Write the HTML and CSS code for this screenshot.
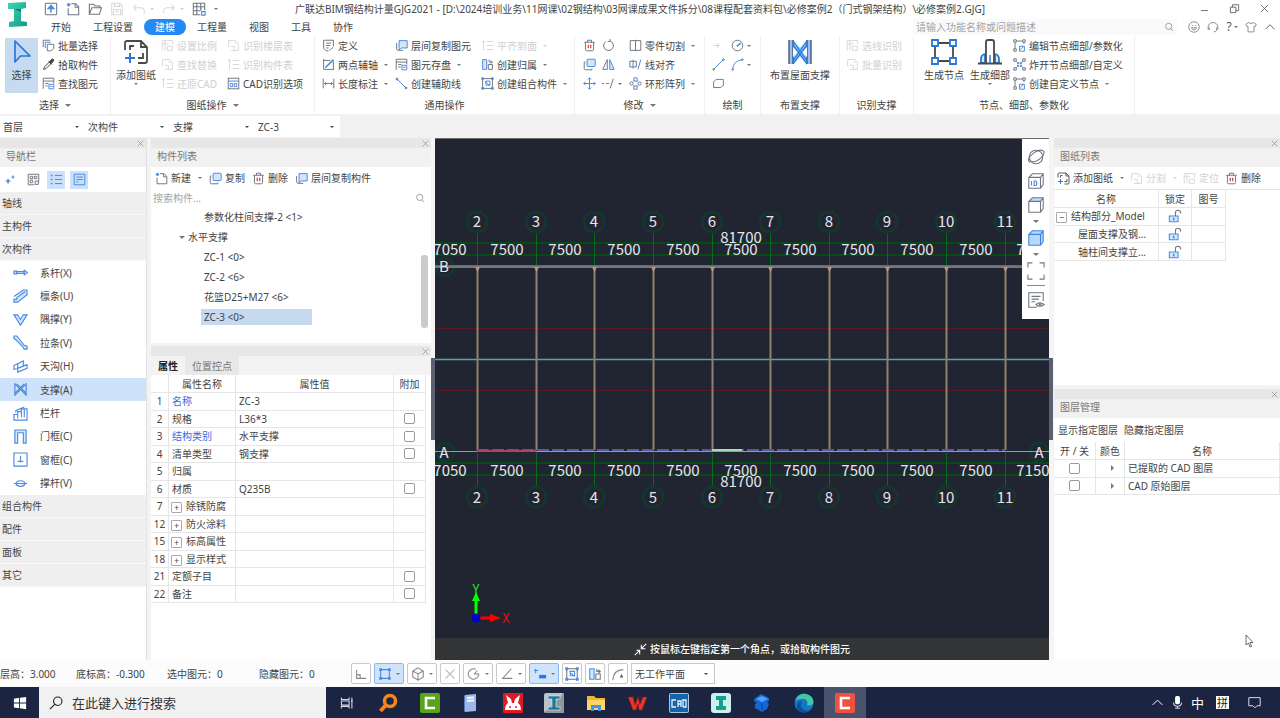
FILE: index.html
```html
<!DOCTYPE html>
<html lang="zh-CN">
<head>
<meta charset="utf-8">
<title>广联达BIM钢结构计量GJG2021</title>
<link rel="stylesheet" href="styles.css">
</head>
<body>
<svg class="sprite" aria-hidden="true">
  <symbol id="i-up" viewBox="0 0 16 16"><rect x="1.500" y="1.500" width="13" height="13" rx="1" class="g"/><path d="M8 12V5M5 7.500L8 4l3 3.500z" class="b2 fb"/></symbol>
  <symbol id="i-new" viewBox="0 0 16 16"><path d="M6 2h5l3.500 3.500v9H2.500V7M10.500 2v4h4" class="g"/><path d="M3 1v4M1 3h4" class="b2"/></symbol>
  <symbol id="i-open" viewBox="0 0 16 16"><path d="M1.500 14V2.500h5l1.500 2h5.500v2M1.500 14l3-7.500h11L13 14z" class="g"/></symbol>
  <symbol id="i-save" viewBox="0 0 16 16"><path d="M2 1.500h9l3 3v10H2zM5 1.500V5h6V2M4 14.500V8.500h8v6M6 11h4" class="l"/></symbol>
  <symbol id="i-undo" viewBox="0 0 16 16"><path d="M5 3L2 6.500 5 10M2 6.500h8q4 0 4 3.500v3" class="l"/></symbol>
  <symbol id="i-redo" viewBox="0 0 16 16"><path d="M11 3l3 3.500-3 3.500M14 6.500H6Q2 6.500 2 10v3" class="l"/></symbol>
  <symbol id="i-table" viewBox="0 0 16 16"><path d="M1.500 1.500h13v8M1.500 1.500v13h8M1.500 5.500h13M1.500 10h8M5.500 1.500v13M10 1.500v8" class="g"/><path d="M11 11h4v4h-4zM10 5.500v4" class="b"/></symbol>
  <symbol id="i-cursor" viewBox="0 0 26 26"><path d="M6 2v21l5.500-6H21z" fill="#b9d6fa" stroke="#2878d8" stroke-width="1.700" stroke-linejoin="round"/></symbol>
  <symbol id="i-copy" viewBox="0 0 16 16"><rect x="5" y="1.500" width="10" height="9" rx="1" class="b lb"/><path d="M3 5H1.500v8q0 1.500 1.500 1.500h8V13" class="g"/></symbol>
  <symbol id="i-batch" viewBox="0 0 16 16"><path d="M1.500 10V1.500H10" class="g"/><path d="M4 11V4h7" class="b"/><path d="M6.500 6.500h8v5l-3 3h-5z" class="g"/></symbol>
  <symbol id="i-pick" viewBox="0 0 16 16"><path d="M2 14l1-3 6-6 2 2-6 6zM8 3.500l4.500 4.500" class="k"/><path d="M9 5l3-3.500q2-1 2.500 1 0 1.500-3.500 4.500z" class="k fk"/></symbol>
  <symbol id="i-find" viewBox="0 0 16 16"><path d="M1.500 14.500v-13h13V8M1.500 5h13M4 8h4M4 11h3" class="g"/><path d="M8.500 9h6v5.500h-6zM10 11.500h3" class="b"/></symbol>
  <symbol id="i-adddwg" viewBox="0 0 26 26"><path d="M2 11V4q0-2 2-2h14l6 6v14q0 2-2 2h-7M18 2v6h6M7 11V7h4M20 14v5h-5" class="d"/><path d="M7 14v10M2 19h10" stroke="#2878d8" stroke-width="2" fill="none"/></symbol>
  <symbol id="i-dis" viewBox="0 0 16 16"><path d="M1.500 14V2h13v5M5 2v12M1.500 6H9" class="l"/><path d="M8 9h6v5H8z" class="l"/></symbol>
  <symbol id="i-dis2" viewBox="0 0 16 16"><path d="M3 2v12M1 4l2-2 2 2M7 3h8M7 8h8M7 13h8" class="l"/></symbol>
  <symbol id="i-dis3" viewBox="0 0 16 16"><path d="M2 2h9l3 3v9H5M2 2v8M5 9h4v5M9 5h3" class="l"/></symbol>
  <symbol id="i-cad" viewBox="0 0 16 16"><rect x="1.500" y="1.500" width="13" height="13" class="g"/><path d="M1.500 5h13M4 8v4h3V8zM9 8h3v4H9z" class="b"/></symbol>
  <symbol id="i-def" viewBox="0 0 16 16"><path d="M2 11.500v-10h12V9M2 11.500l3 3h3M5 5h6M5 8h5M5 11h3" class="g"/><path d="M9 14l5-4" class="b"/></symbol>
  <symbol id="i-axis" viewBox="0 0 16 16"><path d="M2 1v13h13M14 3v11M2 3h8" class="g"/><path d="M4 12l10-10" class="b2"/></symbol>
  <symbol id="i-len" viewBox="0 0 16 16"><path d="M1.500 2v12M14.500 2v12" class="g"/><path d="M3 8h10M5 6L3 8l2 2M11 6l2 2-2 2" class="b"/></symbol>
  <symbol id="i-layer" viewBox="0 0 16 16"><path d="M5 2h10v9H8l-3 2z" class="b lb"/><path d="M2 5v7q0 2 3 2h5" class="g"/></symbol>
  <symbol id="i-line" viewBox="0 0 16 16"><path d="M2 2l12 12" class="b"/><circle cx="2.500" cy="2.500" r="1.200" class="g"/><circle cx="13.500" cy="13.500" r="1.200" class="g"/></symbol>
  <symbol id="i-own" viewBox="0 0 16 16"><path d="M2 14V2h5v12z" class="b lb"/><path d="M9 8h5v6H9zM10 2v3h4M12 3l2 2-2 2" class="g"/></symbol>
  <symbol id="i-combo" viewBox="0 0 16 16"><rect x="2" y="2" width="12" height="12" class="g"/><path d="M5 5l6 6M11 5v5H6V5z" class="b"/><path d="M1 1h2v2H1zM13 1h2v2h-2zM1 13h2v2H1zM13 13h2v2h-2z" class="b fb"/></symbol>
  <symbol id="i-trash" viewBox="0 0 16 16"><path d="M1.500 4h13M5.500 4V1.500h5V4M3 4v9q0 1.500 1.500 1.500h7q1.500 0 1.500-1.500V4" class="g"/><path d="M6.500 7v4.500M9.500 7v4.500" stroke="#d23c3c" stroke-width="1.500"/></symbol>
  <symbol id="i-rot" viewBox="0 0 16 16"><path d="M10 2.500A6 6 0 1 1 5 3M10 0v3H7" class="g"/></symbol>
  <symbol id="i-mirror" viewBox="0 0 16 16"><path d="M6.500 2v12H1z" class="g"/><path d="M9.500 2v12H15z" class="b lb"/></symbol>
  <symbol id="i-move" viewBox="0 0 16 16"><path d="M8 1v14M1 8h14M6 3l2-2 2 2M6 13l2 2 2-2M3 6L1 8l2 2M13 6l2 2-2 2" class="b"/></symbol>
  <symbol id="i-ext" viewBox="0 0 16 16"><path d="M0 8h3M5 8h4" class="b"/><path d="M14 2L10 14" class="g"/></symbol>
  <symbol id="i-cut" viewBox="0 0 16 16"><path d="M1.500 2H14.500v12H1.500zM8 1v14" class="g"/></symbol>
  <symbol id="i-align" viewBox="0 0 16 16"><path d="M1 4h8v7H1z" class="g"/><path d="M5 2v11M14.500 2L11 14" class="b"/></symbol>
  <symbol id="i-ring" viewBox="0 0 16 16"><path d="M6 1h4v4H6zM6 11h4v4H6z" class="b"/><circle cx="3" cy="8" r="2" class="g"/><circle cx="13" cy="8" r="2" class="g"/><path d="M5 5h1M10 5h1M5 11h1M10 11h1" class="b"/></symbol>
  <symbol id="i-pt" viewBox="0 0 16 16"><path d="M2 8h8M7 5v6" class="l"/></symbol>
  <symbol id="i-circ" viewBox="0 0 16 16"><circle cx="8" cy="8" r="6.500" class="g"/><path d="M7 9l5-4" class="b2"/></symbol>
  <symbol id="s-circ" viewBox="0 0 16 16"><path d="M13.500 8A6 6 0 1 1 10 2.500M8 8h6M8 8l4-4" class="s"/></symbol>
  <symbol id="i-seg" viewBox="0 0 16 16"><path d="M2 14L14 2" class="b"/><circle cx="2" cy="14" r="1" class="g"/><circle cx="14" cy="2" r="1" class="g"/></symbol>
  <symbol id="i-arc" viewBox="0 0 16 16"><path d="M2 14Q3 3 14 2" class="b"/><circle cx="2" cy="14" r="1" class="g"/><circle cx="14" cy="2" r="1" class="g"/></symbol>
  <symbol id="i-rect" viewBox="0 0 16 16"><path d="M5 3h9v7" class="b"/><path d="M14 9v1l-3 3H2V6l3-3" class="g"/></symbol>
  <symbol id="i-brace" viewBox="0 0 26 26"><path d="M2 1h4l7 8 7-8h4v24h-4l-7-8-7 8H2z" fill="#8fc3fa"/><path d="M2 1v24M6 1v24M20 1v24M24 1v24" stroke="#444c5c" stroke-width="1.300"/><path d="M6 8l5 5-5 5zM20 8l-5 5 5 5z" fill="#fff"/><path d="M6 2l14 20M20 2L6 22M6 6l14 19M20 6L6 25" stroke="#2b7fe0" stroke-width="1.300"/></symbol>
  <symbol id="i-node" viewBox="0 0 26 26"><path d="M7 4h12M7 22h12M4 7v12M22 7v12" class="d"/><path d="M1 1h6v6H1zM19 1h6v6h-6zM1 19h6v6H1zM19 19h6v6h-6z" fill="#fff" stroke="#2878d8" stroke-width="1.800"/></symbol>
  <symbol id="i-detail" viewBox="0 0 26 26"><path d="M8 15q-4 1-4 5v4h4zM18 15q4 1 4 5v4h-4z" fill="#d6e8fc" stroke="#2878d8" stroke-width="1.800"/><path d="M9 24V3q0-2 2-2h4q2 0 2 2v21M1 24.500h24" class="d"/><path d="M13 16v8" stroke="#2878d8" stroke-width="1.500"/></symbol>
  <symbol id="i-nedit" viewBox="0 0 16 16"><path d="M1 1h3v3H1zM12 1h3v3h-3zM1 12h3v3H1zM4 2.500h8M2.500 4v8M13.500 4v2" class="g"/><path d="M8 15V9h6v6zM9 13l4-4" class="b"/></symbol>
  <symbol id="i-nexp" viewBox="0 0 16 16"><path d="M1 1h3v3H1zM12 1h3v3h-3zM1 12h3v3H1zM12 12h3v3h-3z" class="g"/><path d="M4 4l3 3M12 4L9 7M4 12l3-3M12 12L9 9M5 7h2V5M11 7H9V5M5 9h2v2M11 9H9v2" class="b"/></symbol>
  <symbol id="i-search" viewBox="0 0 16 16"><circle cx="7.500" cy="7" r="5" class="s"/><path d="M11 11l3.500 3.500" class="s"/></symbol>
  <symbol id="i-face" viewBox="0 0 16 16"><circle cx="8" cy="8" r="7" class="s"/><path d="M4.500 9h7q-1 3-3.500 3t-3.500-3zM5 6h1.500M9.500 6H11" class="s"/></symbol>
  <symbol id="i-head" viewBox="0 0 16 16"><path d="M3 11H1.500V8a6.500 6 0 0 1 13 0v3H13M3 8v4M13 8v4q-1 2.500-4 2.500" class="s"/></symbol>
  <symbol id="i-shirt" viewBox="0 0 16 16"><path d="M5 2q3 3 6 0l4 2.500-1.500 3-1.500-.5v7.500H4V7l-1.500.5L1 4.500z" class="s"/></symbol>
  <symbol id="i-chev" viewBox="0 0 16 16"><path d="M2 11l6-6 6 6" class="cur"/></symbol>
  <symbol id="i-close" viewBox="0 0 16 16"><path d="M3 3l10 10M13 3L3 13" class="cur"/></symbol>
  <symbol id="i-min" viewBox="0 0 16 16"><path d="M3 11h10" class="cur"/></symbol>
  <symbol id="i-rest" viewBox="0 0 16 16"><path d="M2 6h8v8H2zM5 6V2.500h9V11h-4" class="cur"/></symbol>
  <symbol id="i-star" viewBox="0 0 16 16"><path d="M5 7v6M2 10h6" class="b2"/><path d="M11 3v4M9 5h4" class="b"/></symbol>
  <symbol id="i-qr" viewBox="0 0 16 16"><path d="M1.500 1.500h13v9M1.500 1.500v13H9M4 4h3v3H4zM9 4h3v3H9zM4 9h3v3H4zM10 10h4v4h-4z" class="g"/></symbol>
  <symbol id="i-list" viewBox="0 0 16 16"><path d="M6 3h9M6 8h9M6 13h9" class="b"/><path d="M1 3h2M1 8h2M1 13h2" class="b2"/></symbol>
  <symbol id="i-list2" viewBox="0 0 16 16"><path d="M1.500 1.500h13v13h-13zM4 5h8M4 8h8M4 11h3" class="b"/></symbol>
  <symbol id="n-tie" viewBox="0 0 16 16"><path d="M4 7h8v2H4z" class="b lb"/><path d="M1 6.500h3v3H1zM12 5.500L15.500 8 12 10.500z" class="b lb"/></symbol>
  <symbol id="n-purlin" viewBox="0 0 16 16"><path d="M1 8L11 1h4v5L5 14H1v-3h3V9l9-6" class="b lb"/></symbol>
  <symbol id="n-knee" viewBox="0 0 16 16"><path d="M1 3h4l3 5 3-5h4L8 14z" class="b lb"/></symbol>
  <symbol id="n-rod" viewBox="0 0 16 16"><path d="M1 1h3l8 10 3 1v3h-3l-2-3L2 4H1z" class="b lb"/></symbol>
  <symbol id="n-gutter" viewBox="0 0 16 16"><path d="M1 7l10-5v5l4-1v4L5 14v-4l-4 1zM5 10l10-4M5 5v5" class="b"/></symbol>
  <symbol id="n-brace" viewBox="0 0 16 16"><path d="M2 1v14M14 1v14M2 2l12 12M14 2L2 14M4 2l10 10M12 2L2 12" class="b"/></symbol>
  <symbol id="n-rail" viewBox="0 0 16 16"><path d="M1 15V9h4V6h4V3h6v12zM5 9v4M9 6v6M12 3v9M3 7V5l9-4" class="b"/></symbol>
  <symbol id="n-door" viewBox="0 0 16 16"><path d="M2 15V1h12v14h-3V4H5v11z" class="b lb"/></symbol>
  <symbol id="n-win" viewBox="0 0 16 16"><path d="M1 1h14v14H1z" class="b"/><path d="M8 4v7M5 10h6" class="b"/></symbol>
  <symbol id="n-strut" viewBox="0 0 16 16"><path d="M1 8h14M3 8q1-3 5-3t5 3q-1 3-5 3T3 8" class="b"/></symbol>
  <symbol id="i-lock" viewBox="0 0 16 16"><path d="M1.500 8h10v6.500h-10z" class="b lb"/><path d="M6.500 10v3" class="b2"/><path d="M8.500 8V4q0-2.500 3-2.500t3 3.500" class="g"/></symbol>
  <symbol id="v-orbit" viewBox="0 0 20 20"><circle cx="10" cy="10" r="7.500" class="v"/><path d="M3 16Q-1 12 7 6t12-2q0 5-6 9T3 14" class="v"/></symbol>
  <symbol id="v-id" viewBox="0 0 20 20"><path d="M2 6l4-4h12v12l-3 4H2zM2 6h13v12M15 6l3-4" class="v"/><path d="M5 10v5M8 10v5h2q2-2.500 0-5z" class="b"/></symbol>
  <symbol id="v-cube" viewBox="0 0 20 20"><path d="M2 6l4-4h12l-3 4z" fill="#bcdcff"/><path d="M2 6l4-4h12v12l-3 4H2zM2 6h13v12M15 6l3-4" class="v"/></symbol>
  <symbol id="v-solid" viewBox="0 0 20 20"><path d="M2 6l4-4h12v12l-3 4H2zM2 6h13v12M15 6l3-4" fill="#b5d8fd" stroke="#3f84d8" stroke-width="1.200"/></symbol>
  <symbol id="v-fit" viewBox="0 0 20 20"><path d="M1 6V1h5M14 1h5v5M19 14v5h-5M6 19H1v-5" class="v"/></symbol>
  <symbol id="v-prop" viewBox="0 0 20 20"><path d="M11 18H2V2h16v9M5 6h10M5 9h8M5 12h4" class="v"/><path d="M10 15q4-4 9 0-5 4-9 0z" class="v"/><circle cx="14.500" cy="15" r="1" class="v"/></symbol>
  <symbol id="s-ortho" viewBox="0 0 16 16"><path d="M3 3v10h11M3 9h4v4" class="s"/></symbol>
  <symbol id="s-poly" viewBox="0 0 16 16"><path d="M3 3h10v10H3z" class="b"/><path d="M2 2h2v2H2zM12 2h2v2h-2zM2 12h2v2H2zM12 12h2v2h-2z" class="b"/></symbol>
  <symbol id="s-box" viewBox="0 0 16 16"><path d="M8 1l6 3.500v7L8 15l-6-3.500v-7zM2 4.500L8 8l6-3.500M8 8v7" class="s"/></symbol>
  <symbol id="s-ang" viewBox="0 0 16 16"><path d="M13 2L3 13h11" class="s"/></symbol>
  <symbol id="s-arc" viewBox="0 0 16 16"><path d="M2 15Q3 3 14 3" class="s"/><path d="M12 8l2 4h-4z" fill="#555"/></symbol>
  <symbol id="s-snap" viewBox="0 0 16 16"><path d="M3 2v5M1 4h5" class="b"/><path d="M7 9h8v4H7z" fill="#2878e8"/></symbol>
</svg>

<header class="head">
  <svg class="logo" viewBox="0 0 22 28" role="img" aria-label="GJG"><defs><linearGradient id="lg" x1="0" y1="0" x2="1" y2="1"><stop offset="0" stop-color="#3fd6b4"/><stop offset="1" stop-color="#139c86"/></linearGradient></defs><path d="M1 3l18-1v6l-5 1v12l6 1v4l-18 1v-5l5-1V9L1 9z" fill="url(#lg)"/><path d="M7 9l7 0v3z" fill="#0c7c70"/></svg>
  <div class="titlebar">
    <div class="quick">
      <button aria-label="上传"><svg><use href="#i-up"/></svg></button>
      <button aria-label="新建"><svg><use href="#i-new"/></svg></button>
      <button aria-label="打开"><svg><use href="#i-open"/></svg></button>
      <button aria-label="保存"><svg><use href="#i-save"/></svg></button>
      <button aria-label="撤销"><svg><use href="#i-undo"/></svg><i class="caret dim"></i></button>
      <button aria-label="重做"><svg><use href="#i-redo"/></svg><i class="caret dim"></i></button>
      <button aria-label="表格"><svg><use href="#i-table"/></svg></button>
      <button aria-label="自定义"><i class="caret"></i></button>
    </div>
    <h1>广联达BIM钢结构计量GJG2021 - [D:\2024培训业务\11网课\02钢结构\03网课成果文件拆分\08课程配套资料包\必修案例2（门式钢架结构）\必修案例2.GJG]</h1>
    <div class="win">
      <button aria-label="最小化"><svg><use href="#i-min"/></svg></button>
      <button aria-label="还原"><svg><use href="#i-rest"/></svg></button>
      <button aria-label="关闭"><svg><use href="#i-close"/></svg></button>
    </div>
  </div>
  <div class="tabbar">
    <nav class="tabs">
      <a href="#">开始</a><a href="#">工程设置</a><a href="#" class="on">建模</a><a href="#">工程量</a><a href="#">视图</a><a href="#">工具</a><a href="#">协作</a>
    </nav>
    <label class="find"><input type="text" aria-label="搜索功能" placeholder="请输入功能名称或问题描述"><svg><use href="#i-search"/></svg></label>
    <div class="help">
      <button aria-label="反馈"><svg><use href="#i-face"/></svg></button>
      <button aria-label="客服"><svg><use href="#i-head"/></svg></button>
      <button class="q" aria-label="帮助">?<i class="caret"></i></button>
      <button aria-label="皮肤"><svg><use href="#i-shirt"/></svg></button>
      <button aria-label="折叠"><svg><use href="#i-chev"/></svg></button>
    </div>
  </div>
</header>

<div class="ribbon">
  <section class="grp g1"><div class="tools">
    <button class="big on"><svg><use href="#i-cursor"/></svg>选择</button>
    <div class="col">
      <button class="tool"><svg><use href="#i-batch"/></svg>批量选择</button>
      <button class="tool"><svg><use href="#i-pick"/></svg>拾取构件</button>
      <button class="tool"><svg><use href="#i-find"/></svg>查找图元</button>
    </div></div><h2>选择<i class="caret wide"></i></h2></section>
  <section class="grp g2"><div class="tools">
    <button class="big"><svg><use href="#i-adddwg"/></svg>添加图纸<i class="caret"></i></button>
    <div class="col c66">
      <button class="tool" disabled><svg><use href="#i-dis"/></svg>设置比例</button>
      <button class="tool" disabled><svg><use href="#i-dis3"/></svg>查找替换</button>
      <button class="tool" disabled><svg><use href="#i-dis2"/></svg>还原CAD</button>
    </div>
    <div class="col">
      <button class="tool" disabled><svg><use href="#i-dis3"/></svg>识别楼层表</button>
      <button class="tool" disabled><svg><use href="#i-dis2"/></svg>识别构件表</button>
      <button class="tool"><svg><use href="#i-cad"/></svg>CAD识别选项</button>
    </div></div><h2>图纸操作<i class="caret wide"></i></h2></section>
  <section class="grp g3"><div class="tools">
    <div class="col c73">
      <button class="tool"><svg><use href="#i-def"/></svg>定义</button>
      <button class="tool"><svg><use href="#i-axis"/></svg>两点辅轴<i class="caret"></i></button>
      <button class="tool"><svg><use href="#i-len"/></svg>长度标注<i class="caret"></i></button>
    </div>
    <div class="col c86">
      <button class="tool"><svg><use href="#i-layer"/></svg>层间复制图元</button>
      <button class="tool"><svg><use href="#i-find"/></svg>图元存盘<i class="caret"></i></button>
      <button class="tool"><svg><use href="#i-line"/></svg>创建辅助线</button>
    </div>
    <div class="col">
      <button class="tool" disabled><svg><use href="#i-dis2"/></svg>平齐到面<i class="caret"></i></button>
      <button class="tool"><svg><use href="#i-own"/></svg>创建归属<i class="caret"></i></button>
      <button class="tool"><svg><use href="#i-combo"/></svg>创建组合构件<i class="caret"></i></button>
    </div></div><h2>通用操作</h2></section>
  <section class="grp g4"><div class="tools">
    <div class="col c19">
      <button class="tool" aria-label="删除"><svg><use href="#i-trash"/></svg></button>
      <button class="tool" aria-label="复制"><svg><use href="#i-copy"/></svg></button>
      <button class="tool" aria-label="移动"><svg><use href="#i-move"/></svg></button>
    </div>
    <div class="col c27">
      <button class="tool" aria-label="旋转"><svg><use href="#i-rot"/></svg></button>
      <button class="tool" aria-label="镜像"><svg><use href="#i-mirror"/></svg></button>
      <button class="tool tight" aria-label="延伸"><svg><use href="#i-ext"/></svg><i class="caret"></i></button>
    </div>
    <div class="col">
      <button class="tool"><svg><use href="#i-cut"/></svg>零件切割<i class="caret"></i></button>
      <button class="tool"><svg><use href="#i-align"/></svg>线对齐</button>
      <button class="tool"><svg><use href="#i-ring"/></svg>环形阵列<i class="caret"></i></button>
    </div></div><h2>修改<i class="caret wide"></i></h2></section>
  <section class="grp g5"><div class="tools">
    <div class="col c19">
      <button class="tool" aria-label="点" disabled><svg><use href="#i-pt"/></svg></button>
      <button class="tool" aria-label="直线"><svg><use href="#i-seg"/></svg></button>
      <button class="tool" aria-label="矩形"><svg><use href="#i-rect"/></svg></button>
    </div>
    <div class="col">
      <button class="tool tight" aria-label="圆"><svg><use href="#i-circ"/></svg><i class="caret"></i></button>
      <button class="tool tight" aria-label="弧"><svg><use href="#i-arc"/></svg><i class="caret"></i></button>
    </div></div><h2>绘制</h2></section>
  <section class="grp g6"><div class="tools"><button class="big"><svg><use href="#i-brace"/></svg>布置屋面支撑</button></div><h2>布置支撑</h2></section>
  <section class="grp g7"><div class="tools"><div class="col">
      <button class="tool" disabled><svg><use href="#i-dis"/></svg>选线识别</button>
      <button class="tool" disabled><svg><use href="#i-dis3"/></svg>批量识别</button>
    </div></div><h2>识别支撑</h2></section>
  <section class="grp g8"><div class="tools">
    <button class="big"><svg><use href="#i-node"/></svg>生成节点</button>
    <button class="big"><svg><use href="#i-detail"/></svg>生成细部<i class="caret"></i></button>
    <div class="col">
      <button class="tool"><svg><use href="#i-nedit"/></svg>编辑节点细部/参数化</button>
      <button class="tool"><svg><use href="#i-nexp"/></svg>炸开节点细部/自定义</button>
      <button class="tool"><svg><use href="#i-nedit"/></svg>创建自定义节点<i class="caret"></i></button>
    </div></div><h2>节点、细部、参数化</h2></section>
</div>

<div class="filters">
  <span class="sel"><select aria-label="楼层"><option>首层</option></select></span>
  <span class="sel"><select aria-label="构件分类"><option>次构件</option></select></span>
  <span class="sel"><select aria-label="构件类型"><option>支撑</option></select></span>
  <span class="sel"><select aria-label="构件"><option>ZC-3</option></select></span>
</div>

<main class="work">
  <aside class="nav panel">
    <div class="strip"><button aria-label="关闭导航栏"><svg><use href="#i-close"/></svg></button></div>
    <h3>导航栏</h3>
    <div class="navtools">
      <button aria-label="收藏"><svg><use href="#i-star"/></svg></button>
      <button aria-label="图标"><svg><use href="#i-qr"/></svg></button>
      <button aria-label="列表" class="on"><svg><use href="#i-list"/></svg></button>
      <button aria-label="详情" class="on"><svg><use href="#i-list2"/></svg></button>
    </div>
    <button class="acc">轴线</button>
    <button class="acc">主构件</button>
    <button class="acc">次构件</button>
    <ul class="kinds">
      <li><a href="#"><svg><use href="#n-tie"/></svg>系杆(X)</a></li>
      <li><a href="#"><svg><use href="#n-purlin"/></svg>檩条(U)</a></li>
      <li><a href="#"><svg><use href="#n-knee"/></svg>隅撑(Y)</a></li>
      <li><a href="#"><svg><use href="#n-rod"/></svg>拉条(V)</a></li>
      <li><a href="#"><svg><use href="#n-gutter"/></svg>天沟(H)</a></li>
      <li><a href="#" class="on"><svg><use href="#n-brace"/></svg>支撑(A)</a></li>
      <li><a href="#"><svg><use href="#n-rail"/></svg>栏杆</a></li>
      <li><a href="#"><svg><use href="#n-door"/></svg>门框(C)</a></li>
      <li><a href="#"><svg><use href="#n-win"/></svg>窗框(C)</a></li>
      <li><a href="#"><svg><use href="#n-strut"/></svg>撑杆(V)</a></li>
    </ul>
    <button class="acc">组合构件</button>
    <button class="acc">配件</button>
    <button class="acc">面板</button>
    <button class="acc">其它</button>
  </aside>

  <div class="middle">
    <section class="panel comps">
      <div class="strip"><button aria-label="关闭构件列表"><svg><use href="#i-close"/></svg></button></div>
      <h3>构件列表</h3>
      <div class="bar">
        <button class="tool"><svg><use href="#i-new"/></svg>新建<i class="caret"></i></button>
        <button class="tool"><svg><use href="#i-copy"/></svg>复制</button>
        <button class="tool"><svg><use href="#i-trash"/></svg>删除</button>
        <button class="tool"><svg><use href="#i-layer"/></svg>层间复制构件</button>
      </div>
      <label class="filter"><input type="text" aria-label="搜索构件" placeholder="搜索构件..."><svg><use href="#i-search"/></svg></label>
      <div class="treebox">
        <ul class="tree">
          <li class="leaf"><span>参数化柱间支撑-2 &lt;1&gt;</span></li>
          <li><i class="caret wide"></i>水平支撑</li>
          <li class="leaf"><span>ZC-1 &lt;0&gt;</span></li>
          <li class="leaf"><span>ZC-2 &lt;6&gt;</span></li>
          <li class="leaf"><span>花篮D25+M27 &lt;6&gt;</span></li>
          <li class="leaf on"><span>ZC-3 &lt;0&gt;</span></li>
        </ul>
        <div class="scroll"></div>
      </div>
    </section>
    <section class="panel props">
      <div class="strip"><button aria-label="关闭属性"><svg><use href="#i-close"/></svg></button></div>
      <div class="ptabs"><button class="on">属性</button><button>位置控点</button></div>
      <table class="grid ptable">
        <thead><tr><th class="w-no"></th><th class="w-name">属性名称</th><th>属性值</th><th class="w-add">附加</th></tr></thead>
        <tbody>
          <tr><td>1</td><td class="link">名称</td><td>ZC-3</td><td></td></tr>
          <tr><td>2</td><td>规格</td><td>L36*3</td><td><input type="checkbox" aria-label="附加 规格"></td></tr>
          <tr><td>3</td><td class="link">结构类别</td><td>水平支撑</td><td><input type="checkbox" aria-label="附加 结构类别"></td></tr>
          <tr><td>4</td><td>清单类型</td><td>钢支撑</td><td><input type="checkbox" aria-label="附加 清单类型"></td></tr>
          <tr><td>5</td><td>归属</td><td></td><td></td></tr>
          <tr><td>6</td><td>材质</td><td>Q235B</td><td><input type="checkbox" aria-label="附加 材质"></td></tr>
          <tr><td>7</td><td><button class="exp" aria-label="展开">+</button>除锈防腐</td><td></td><td></td></tr>
          <tr><td>12</td><td><button class="exp" aria-label="展开">+</button>防火涂料</td><td></td><td></td></tr>
          <tr><td>15</td><td><button class="exp" aria-label="展开">+</button>标高属性</td><td></td><td></td></tr>
          <tr><td>18</td><td><button class="exp" aria-label="展开">+</button>显示样式</td><td></td><td></td></tr>
          <tr><td>21</td><td>定额子目</td><td></td><td><input type="checkbox" aria-label="附加 定额子目"></td></tr>
          <tr><td>22</td><td>备注</td><td></td><td><input type="checkbox" aria-label="附加 备注"></td></tr>
        </tbody>
      </table>
    </section>
  </div>
  <div class="split"><i></i></div>

  <section class="canvas">
    <svg class="plan" aria-label="平面图">
      <path d="M0 105H614M0 117H614M0 325H614M0 337H614" stroke="#08491a" stroke-width="2"/>
      <path d="M42.500 95V129M101.500 95V129M159.500 95V129M218.500 95V129M277.500 95V129M335.500 95V129M394.500 95V129M452.500 95V129M511.500 95V129M570.500 95V129M42.500 315V348M101.500 315V348M159.500 315V348M218.500 315V348M277.500 315V348M335.500 315V348M394.500 315V348M452.500 315V348M511.500 315V348M570.500 315V348" stroke="#0a6a1c"/>
      <g fill="none" stroke="#16352f" stroke-width="3">
        <circle cx="42" cy="84" r="10"/><circle cx="101" cy="84" r="10"/><circle cx="159" cy="84" r="10"/><circle cx="218" cy="84" r="10"/><circle cx="277" cy="84" r="10"/><circle cx="335" cy="84" r="10"/><circle cx="394" cy="84" r="10"/><circle cx="452" cy="84" r="10"/><circle cx="511" cy="84" r="10"/><circle cx="570" cy="84" r="10"/>
        <circle cx="42" cy="359" r="10"/><circle cx="101" cy="359" r="10"/><circle cx="159" cy="359" r="10"/><circle cx="218" cy="359" r="10"/><circle cx="277" cy="359" r="10"/><circle cx="335" cy="359" r="10"/><circle cx="394" cy="359" r="10"/><circle cx="452" cy="359" r="10"/><circle cx="511" cy="359" r="10"/><circle cx="570" cy="359" r="10"/>
        <circle cx="10" cy="129" r="9"/><circle cx="10" cy="314" r="9"/><circle cx="604" cy="314" r="9"/>
      </g>
      <path d="M0 190.500H614M0 252.500H614" stroke="#5a1a24"/>
      <path d="M0 221.500H614" stroke="#4fa6ae" stroke-width="1.500"/>
      <path d="M42.500 130V312M101.500 130V312M159.500 130V312M218.500 130V312M277.500 130V312M335.500 130V312M394.500 130V312M452.500 130V312M511.500 130V312M570.500 130V312" stroke="#94806a" stroke-width="2"/>
      <path d="M0 127.500H614" stroke="#a05058"/><path d="M0 129H614" stroke="#8f909a" stroke-width="1.500"/>
      <path d="M40 129h5l-2.500 5zM99 129h5l-2.500 5zM157 129h5l-2.500 5zM216 129h5l-2.500 5zM275 129h5l-2.500 5zM333 129h5l-2.500 5zM392 129h5l-2.500 5zM450 129h5l-2.500 5zM509 129h5l-2.500 5zM568 129h5l-2.500 5z" fill="#b0968a"/>
      <path d="M0 313.500H614" stroke="#bf8798"/><path d="M42 312H570" stroke="#5a55a0" stroke-width="2" stroke-dasharray="12 3"/><path d="M42 313H101" stroke="#b04468" stroke-width="2"/><path d="M277 312h30" stroke="#a8d8b4" stroke-width="2"/>
      <g class="lab">
        <text x="42" y="89">2</text><text x="101" y="89">3</text><text x="159" y="89">4</text><text x="218" y="89">5</text><text x="277" y="89">6</text><text x="335" y="89">7</text><text x="394" y="89">8</text><text x="452" y="89">9</text><text x="511" y="89">10</text><text x="570" y="89">11</text>
        <text x="42" y="365">2</text><text x="101" y="365">3</text><text x="159" y="365">4</text><text x="218" y="365">5</text><text x="277" y="365">6</text><text x="335" y="365">7</text><text x="394" y="365">8</text><text x="452" y="365">9</text><text x="511" y="365">10</text><text x="570" y="365">11</text>
        <text x="15" y="117">7050</text><text x="72" y="117">7500</text><text x="130" y="117">7500</text><text x="189" y="117">7500</text><text x="248" y="117">7500</text><text x="306" y="117">7500</text><text x="365" y="117">7500</text><text x="423" y="117">7500</text><text x="482" y="117">7500</text><text x="541" y="117">7500</text><text x="598" y="117">7150</text>
        <text x="15" y="338">7050</text><text x="72" y="338">7500</text><text x="130" y="338">7500</text><text x="189" y="338">7500</text><text x="248" y="338">7500</text><text x="306" y="338">7500</text><text x="365" y="338">7500</text><text x="423" y="338">7500</text><text x="482" y="338">7500</text><text x="541" y="338">7500</text><text x="598" y="338">7150</text>
        <text x="306" y="105">81700</text><text x="306" y="349">81700</text>
        <text x="9" y="134">B</text><text x="9" y="320">A</text><text x="604" y="320">A</text>
      </g>
      <path d="M39.500 477V463H37l4-9 4 9h-2.500v14z" fill="#0f0"/><path d="M45 478.500h10V476l11 4-11 4v-2.500H45z" fill="#f00"/><circle cx="41" cy="480" r="4.500" fill="#00c"/>
      <text x="41" y="456" class="ucs" fill="#1fe01f">Y</text><text x="71" y="485" class="ucs" fill="#e01010">X</text>
    </svg>
    <div class="views">
      <button aria-label="动态观察"><svg><use href="#v-orbit"/></svg></button>
      <button aria-label="三维"><svg><use href="#v-id"/></svg></button>
      <button aria-label="俯视"><svg><use href="#v-cube"/></svg><i class="caret wide"></i></button>
      <button aria-label="实体"><svg><use href="#v-solid"/></svg><i class="caret wide"></i></button>
      <button aria-label="全屏"><svg><use href="#v-fit"/></svg></button>
      <hr>
      <button aria-label="显示设置"><svg><use href="#v-prop"/></svg></button>
    </div>
    <div class="hint"><svg viewBox="0 0 16 16"><path d="M15 1L9 7M9 2v5h5M1 15l6-6M3 9h4v5" fill="none" stroke="#fff" stroke-width="1.300"/></svg>按鼠标左键指定第一个角点，或拾取构件图元</div>
  </section>
  <div class="split"><i></i></div>

  <div class="right">
    <section class="panel drawings">
      <div class="strip"><button aria-label="关闭图纸列表"><svg><use href="#i-close"/></svg></button></div>
      <h3>图纸列表</h3>
      <div class="bar">
        <button class="tool"><svg><use href="#i-adddwg"/></svg>添加图纸<i class="caret"></i></button>
        <button class="tool" disabled><svg><use href="#i-dis3"/></svg>分割<i class="caret"></i></button>
        <button class="tool" disabled><svg><use href="#i-dis"/></svg>定位</button>
        <button class="tool"><svg><use href="#i-trash"/></svg>删除</button>
      </div>
      <table class="grid dtable">
        <thead><tr><th>名称</th><th class="w-lock">锁定</th><th class="w-num">图号</th></tr></thead>
        <tbody>
          <tr><td><button class="exp" aria-label="折叠">−</button>结构部分_Model</td><td><svg><use href="#i-lock"/></svg></td><td></td></tr>
          <tr><td class="sub">屋面支撑及钢...</td><td><svg><use href="#i-lock"/></svg></td><td></td></tr>
          <tr><td class="sub">轴柱间支撑立...</td><td><svg><use href="#i-lock"/></svg></td><td></td></tr>
        </tbody>
      </table>
    </section>
    <section class="panel layers">
      <div class="strip"><button aria-label="关闭图层管理"><svg><use href="#i-close"/></svg></button></div>
      <h3>图层管理</h3>
      <div class="links"><button>显示指定图层</button><button>隐藏指定图层</button></div>
      <table class="grid ltable">
        <thead><tr><th class="w-sw">开 / 关</th><th class="w-col">颜色</th><th>名称</th></tr></thead>
        <tbody>
          <tr><td><input type="checkbox" aria-label="已提取的 CAD 图层"></td><td><i class="tri"></i></td><td>已提取的 CAD 图层</td></tr>
          <tr><td><input type="checkbox" aria-label="CAD 原始图层"></td><td><i class="tri"></i></td><td>CAD 原始图层</td></tr>
        </tbody>
      </table>
    </section>
  </div>
</main>

<div class="status">
  <div class="facts"><span>层高：3.000</span><span>底标高：-0.300</span><span>选中图元：0</span><span>隐藏图元：0</span></div>
  <div class="snaps">
    <button aria-label="正交"><svg><use href="#s-ortho"/></svg></button>
    <button class="drop on" aria-label="选择方式"><svg><use href="#s-poly"/></svg><i class="caret"></i></button>
    <button class="drop" aria-label="视图"><svg><use href="#s-box"/></svg><i class="caret"></i></button>
    <button class="x" aria-label="交点"><svg><use href="#i-close"/></svg></button>
    <button class="drop" aria-label="圆"><svg><use href="#s-circ"/></svg><i class="caret"></i></button>
    <button class="drop" aria-label="角度"><svg><use href="#s-ang"/></svg><i class="caret"></i></button>
    <button class="drop on" aria-label="捕捉"><svg><use href="#s-snap"/></svg><i class="caret"></i></button>
    <button aria-label="组合"><svg><use href="#i-combo"/></svg></button>
    <button aria-label="归属"><svg><use href="#i-own"/></svg></button>
    <button aria-label="弧线"><svg><use href="#s-arc"/></svg></button>
    <span class="sel plane"><select aria-label="工作平面"><option>无工作平面</option></select></span>
  </div>
</div>

<footer class="taskbar">
  <button class="start" aria-label="开始"><svg viewBox="0 0 16 16"><path d="M1 3l6-1v5.500H1zM8 2l7-1v6.500H8zM1 8.500h6V14l-6-1zM8 8.500h7V15l-7-1z" fill="#fff"/></svg></button>
  <label class="ask"><svg viewBox="0 0 16 16"><circle cx="10" cy="6" r="4.800" fill="none" stroke="#222" stroke-width="1.300"/><path d="M6.500 9.500L1 15" stroke="#222" stroke-width="1.300"/></svg><input type="text" aria-label="搜索" placeholder="在此键入进行搜索"></label>
  <div class="apps">
    <button aria-label="任务视图"><svg class="sm" viewBox="0 0 20 20"><path d="M2 2v3h11V2M2 18v-3h11v3M2 7h11v6H2zM17 2v16M15.500 7h3" fill="none" stroke="#d8dce8" stroke-width="1.500"/></svg></button>
    <button aria-label="查找"><svg viewBox="0 0 20 20"><circle cx="12" cy="8" r="5.500" fill="none" stroke="#f5861f" stroke-width="3.500"/><path d="M8 12l-5.500 6" stroke="#f5861f" stroke-width="4"/></svg></button>
    <button aria-label="录屏"><svg viewBox="0 0 20 20"><rect width="20" height="20" rx="2" fill="#58a618"/><path d="M15 5H6v10h9" fill="none" stroke="#fff" stroke-width="2.600"/></svg></button>
    <button aria-label="计算器"><svg viewBox="0 0 20 20"><path d="M4 2l11-1v17l-11 1z" fill="#9db8e8"/><path d="M6 5l7-.5M6 8l7-.5" stroke="#eef4ff" stroke-width="2"/><path d="M4 2v17l-1-1V3z" fill="#5c78b8"/></svg></button>
    <button aria-label="兔子"><svg viewBox="0 0 20 20"><rect width="20" height="20" rx="1" fill="#e01a24"/><path d="M3 2l5 4 1 4h2l1-4 5-4-2 8q3 2 3 7H2q0-5 3-7z" fill="#fff"/><circle cx="7" cy="14" r="1" fill="#e01a24"/><circle cx="13" cy="14" r="1" fill="#e01a24"/></svg></button>
    <button aria-label="计量软件"><svg viewBox="0 0 20 20"><rect width="20" height="20" rx="2" fill="#b9c2c8"/><path d="M0 20L20 0v20z" fill="#8c979f"/><path d="M4 3h12v3h-4v8h4v3H4v-3h4V6H4z" fill="#1c7896" stroke="#e6f4f8" stroke-width=".6"/></svg></button>
    <button aria-label="文件夹"><svg viewBox="0 0 20 20"><path d="M1 3h7l2 2h9v12H1z" fill="#f2b632"/><path d="M1 7h18v10H1z" fill="#fbd667"/><path d="M5 18v-6h10v6h-3v-3H8v3z" fill="#3f97dd"/></svg></button>
    <button aria-label="WPS"><svg viewBox="0 0 20 20"><path d="M0 4h5l2 8 3-8h9l-5 13h-3l-1-6-2 6H5zM10 4l2 7 3-7" fill="#e8352c" stroke="#8c1812" stroke-width=".6"/></svg></button>
    <button aria-label="CAD"><svg viewBox="0 0 20 20"><rect x=".5" y=".5" width="19" height="19" rx="1" fill="#1565a8" stroke="#a9c4dc"/><path d="M7 7H3v7h4M9 14V8h3v6M9 11h3M14 6v8M14 14h3V7h-3" fill="none" stroke="#e6f2ff" stroke-width="1.300"/></svg></button>
    <button aria-label="GJG"><svg viewBox="0 0 20 20"><rect width="20" height="20" rx="3" fill="#c9f2ea"/><path d="M5 3h10v4h-3v6h3v4H5v-4h3V7H5z" fill="#1b9c8c"/></svg></button>
    <button aria-label="模型"><svg viewBox="0 0 20 20"><path d="M9 1l8 4v3l-2 1 2 2-2 5-5 3-7-4v-4l2-1-3-2V6z" fill="#1766d8"/><path d="M4 6l6 3 6-3-6-3z" fill="#4fa2ff"/><path d="M10 10v7" stroke="#0b3f96"/></svg></button>
    <button aria-label="Edge"><svg viewBox="0 0 20 20"><circle cx="10" cy="10" r="9.500" fill="#1377c8"/><path d="M1 8Q4 0 11 .8 19 2 19.500 9q-.5 4-6 3.500-1-1.500 0-2.500-1-5-6-4Q3 6 1 8z" fill="#42c6a4"/><path d="M8 8q-3 5 1 8t8 0q-3 4-8 3.500Q2 18 3 12q1-4 5-4z" fill="#0c4f9e"/></svg></button>
    <button class="on" aria-label="录制"><svg viewBox="0 0 20 20"><rect width="20" height="20" rx="2" fill="#f2503f"/><path d="M15 5H6v10h9" fill="none" stroke="#fff" stroke-width="2.600"/></svg></button>
  </div>
  <div class="tray">
    <button aria-label="显示隐藏的图标"><svg><use href="#i-chev"/></svg></button>
    <button aria-label="麦克风"><svg viewBox="0 0 16 16"><rect x="5" y="0" width="6" height="10" rx="2" fill="#fff"/><path d="M3 8q0 4.500 5 4.500T13 8M8 12v3M5 15h6" fill="none" stroke="#cdd3e0" stroke-width="1.300"/></svg></button>
    <button class="ime">中</button>
    <button class="ime box">拼</button>
    <button class="msg" aria-label="通知"><svg viewBox="0 0 16 16"><path d="M1 2h14v10h-4l-2.500 2.500L6 12H1z" fill="none" stroke="#dfe3ee" stroke-width="1.200"/></svg></button>
  </div>
</footer>
<svg class="pointer" viewBox="0 0 9 14" aria-hidden="true"><path d="M1 1v10l2.500-2L5 13l1.500-.5L5 8.500h3z" fill="#fff" stroke="#333" stroke-width=".7"/></svg>
</body>
</html>
```
FILE: styles.css
```css
* { box-sizing: border-box; }
html, body { height: 100%; }
body {
  margin: 0; display: flex; flex-direction: column; overflow: hidden;
  font: 10px/14px "Noto Sans", "Noto Sans CJK SC", sans-serif;
  color: #444; background: #fff;
}
button, input, select { font: inherit; color: inherit; border: 0; padding: 0; margin: 0; background: none; }
button { display: flex; align-items: center; justify-content: center; white-space: nowrap; }
a { color: inherit; text-decoration: none; }
h1, h2, h3, ul { margin: 0; padding: 0; font-size: 10px; font-weight: 400; list-style: none; }
svg { display: block; width: 14px; height: 14px; flex: none; }
input { min-width: 0; outline: 0; }
.sprite { position: absolute; width: 0; height: 0; }

/* icon strokes */
.g, .b, .b2, .k, .l, .s, .d, .v, .cur { fill: none; stroke-width: 1.2; }
.g { stroke: #70757e; }
.b, .b2 { stroke: #4a8ae0; }
.b2 { stroke-width: 1.8; }
.k { stroke: #444; }
.l { stroke: #d8d8d8; }
.s { stroke: #858585; }
.d { stroke: #4a4a4a; stroke-width: 1.8; }
.v { stroke: #6f7683; }
.cur { stroke: currentColor; }
.fb { fill: #4a8ae0; }
.lb { fill: #d3e6fc; }
.fk { fill: #444; }

.caret { flex: none; width: 0; height: 0; border: 2px solid transparent; border-top-color: #777; border-bottom: 0; }
.caret.wide { border-width: 3px 3px 0; }
.caret.dim { border-top-color: #ccc; }

/* header */
.head { flex: none; display: grid; grid-template-columns: 40px 1fr; grid-template-rows: 17px 19px; }
.logo { grid-row: 1 / 3; width: 22px; height: 28px; margin-left: 7px; }
.titlebar { display: grid; grid-template-columns: 204px 1fr 244px; align-items: center; }
.titlebar h1 { text-align: center; white-space: nowrap; overflow: hidden; }
.quick { display: flex; gap: 8px; padding-left: 4px; align-items: center; }
.quick svg { width: 14px; height: 14px; }
.quick button { gap: 4px; }
.win { display: flex; justify-content: flex-end; gap: 19px; padding-right: 10px; color: #555; }
.win svg { width: 11px; height: 11px; }
.tabbar { display: flex; align-items: center; }
.tabs { display: flex; flex: 1; }
.tabs a { padding: 0 11px; line-height: 16px; border-radius: 8px; }
.tabs .on { background: #2489f5; color: #fff; }
.find { display: flex; align-items: center; width: 264px; height: 16px; padding: 0 3px; background: #fafafa; color: #999; }
.find input { flex: 1; }
.find svg { width: 10px; height: 10px; }
::placeholder { color: #a4a4a4; opacity: 1; }
.help { display: flex; align-items: center; gap: 7px; padding: 0 4px 0 11px; color: #555; }
.help svg, .help button { width: 12px; height: 12px; gap: 2px; }
.help .q { font-size: 12px; }

/* ribbon */
.ribbon { flex: none; display: flex; height: 78px; }
.grp { flex: none; display: flex; flex-direction: column; border-right: 1px solid #f0f0f0; }
.tools { display: flex; flex: 1; }
.grp h2 { display: flex; justify-content: center; align-items: center; gap: 6px; height: 18px; }
.col { display: flex; flex-direction: column; }
.tool { height: 19px; gap: 3px; justify-content: flex-start; }
.tool svg { width: 13px; height: 13px; }
.tool .caret { margin-left: 3px; }
.tool.tight .caret { margin-left: 0; }
.tool:disabled { color: #d0d0d0; }
.tool:disabled .caret { border-top-color: #d0d0d0; }
.big { flex-direction: column; justify-content: flex-start; gap: 3px; padding-top: 3px; height: 57px; }
.big svg { width: 26px; height: 26px; }
.big .caret { margin-top: -2px; }
.big.on { background: #c6dbef; margin-top: 2px; height: 55px; padding-top: 1px; }
.g1 { width: 111px; } .g1 .tools { padding-left: 5px; gap: 4px; } .g1 .big { width: 33px; }
.g2 { width: 204px; } .g2 .tools { padding-left: 4px; } .g2 .big { width: 42px; margin-right: 4px; }
.g3 { width: 260px; } .g3 .tools { padding-left: 7px; }
.g4 { width: 130px; } .g4 .tools { padding-left: 8px; }
.g5 { width: 56px; } .g5 .tools { padding-left: 7px; }
.g6 { width: 79px; } .g6 .tools { justify-content: center; }
.g7 { width: 74px; } .g7 .tools { padding-left: 6px; }
.g8 { width: 221px; } .g8 .tools { padding-left: 7px; } .g8 .big { width: 46px; }
.c19 { width: 19px; } .c27 { width: 27px; } .c66 { width: 66px; } .c73 { width: 73px; } .c86 { width: 86px; }

/* filters */
.filters { flex: none; display: flex; height: 24px; padding: 2px 0 1px; background: #f1f1f1; }
.sel { position: relative; width: 85px; background: #fff; }
.sel select { appearance: none; width: 100%; height: 100%; padding: 0 3px; outline: 0; }
.sel::after { content: ""; position: absolute; right: 6px; top: 50%; margin-top: -1px; border: 2px solid transparent; border-top-color: #444; border-bottom: 0; }

/* workspace */
.work { flex: 1; min-height: 0; display: flex; background: #f3f3f4; }
.panel { background: #fff; }
.strip { display: flex; justify-content: flex-end; height: 10px; padding-right: 1px; background: #e7e7e7; color: #888; }
.strip svg { width: 9px; height: 9px; }
.panel h3 { height: 19px; padding-left: 6px; line-height: 17px; background: #f1f1f1; color: #777; }
.nav { width: 147px; flex: none; border-right: 1px solid #e2e2e2; }
.navtools { display: flex; align-items: center; gap: 5px; height: 25px; padding-left: 1px; }
.navtools button { width: 18px; height: 18px; }
.navtools .on { background: #cbe0fa; }
.navtools svg { width: 13px; height: 13px; }
.acc { width: 100%; height: 23px; justify-content: flex-start; padding-left: 2px; background: #efefef; border-bottom: 1px solid #f8f8f8; }
.kinds { display: grid; grid-auto-rows: 1fr; height: 234px; }
.kinds a { display: flex; align-items: center; height: 100%; gap: 12px; padding-left: 13px; }
.kinds svg { width: 15px; height: 15px; }
.kinds .on { background: #cfe2fb; }
.middle { width: 280px; flex: none; margin-left: 4px; display: flex; flex-direction: column; gap: 3px; }
.comps { height: 205px; flex: none; }
.props { flex: 1; }
.bar { display: flex; gap: 7px; height: 22px; align-items: center; padding-left: 4px; }
.bar .caret { margin-left: 4px; }
.filter { display: flex; align-items: center; height: 18px; padding: 0 6px 0 2px; }
.filter input { flex: 1; }
.filter svg { width: 10px; height: 10px; }
.treebox { display: flex; }
.tree { flex: 1; }
.tree li { display: flex; align-items: center; gap: 3px; height: 20px; padding-left: 28px; }
.tree .leaf { padding-left: 50px; }
.tree .leaf span { width: 111px; padding-left: 3px; line-height: 16px; }
.tree .on span { background: #c5d9f0; }
.scroll { width: 7px; height: 73px; margin: 48px 3px 0 0; border-radius: 3px; background: #cbcbcb; }
.ptabs { display: flex; height: 19px; background: #f3f3f3; }
.ptabs button { padding: 0 7px; color: #777; background: #e8e8e8; }
.ptabs .on { background: none; color: #222; font-weight: 700; }
.grid { border-collapse: separate; border-spacing: 0; table-layout: fixed; }
.grid th, .grid td { border: solid #e6e6e6; border-width: 0 1px 1px 0; padding: 0 3px; font-weight: 400; text-align: left; white-space: nowrap; line-height: 14px; }
.grid th { height: 18px; text-align: center; }
.grid input { appearance: none; display: block; width: 11px; height: 11px; margin: 0 auto; border: 1px solid #9a9a9a; border-radius: 2px; background: #fff; }
.grid td svg { width: 14px; height: 14px; margin: 0 auto; }
.exp { display: inline-flex; width: 11px; height: 11px; margin: 0 4px 0 -1px; border: 1px solid #aaa; border-radius: 1px; line-height: 9px; font-size: 9px; vertical-align: text-bottom; }
.ptable { width: calc(100% - 5px); height: 228px; }
.ptable td:first-child { text-align: center; padding: 0; }
.ptable .link { color: #2f6be0; }
.w-no { width: 18px; } .w-name { width: 67px; } .w-add { width: 32px; }

/* drawing area */
.split { width: 4px; flex: none; background: #f5f5f6; padding-top: 220px; }
.split i { display: block; height: 82px; background: #5a6070; }
.canvas { position: relative; flex: 1; min-width: 0; display: flex; flex-direction: column; background: #212531; overflow: hidden; border-top: 1px solid #6b6b6b; }
.plan { flex: 1; width: 100%; min-height: 0; margin-top: -1px; }
.lab { font: 15px "Noto Sans CJK SC", sans-serif; fill: #e6e6ea; text-anchor: middle; }
.ucs { font: 13px "Noto Sans CJK SC", sans-serif; text-anchor: middle; }
.views { position: absolute; top: 0; right: 0; width: 27px; padding: 9px 0 10px; display: flex; flex-direction: column; align-items: center; gap: 6px; background: #fff; }
.views svg { width: 18px; height: 18px; }
.views button { flex-direction: column; gap: 6px; }
.views hr { width: 18px; margin: -1px 0; border: 0; border-top: 1px solid #888; }
.hint { flex: none; display: flex; align-items: center; justify-content: center; gap: 3px; height: 22px; background: #333436; color: #fff; font-weight: 500; }
.hint svg { width: 13px; height: 13px; }

/* right side */
.right { width: 227px; flex: none; display: flex; flex-direction: column; gap: 4px; padding-left: 1px; }
.drawings { height: 247px; flex: none; }
.layers { flex: 1; }
.right .bar { gap: 6px; height: 23px; padding-left: 3px; border-bottom: 1px solid #e4e4e4; }
.dtable { width: 172px; height: 71px; }
.w-lock { width: 33px; } .w-num { width: 34px; }
.dtable .sub { padding-left: 24px; }
.links { display: flex; gap: 6px; height: 24px; padding-left: 4px; }
.ltable { width: 100%; height: 53px; }
.w-sw { width: 42px; } .w-col { width: 29px; }
.tri { display: block; width: 0; margin-left: 12px; border: 3px solid transparent; border-left-color: #777; border-right: 0; }

/* status bar */
.status { flex: none; display: flex; align-items: center; height: 27px; background: #fcfcfc; }
.facts { display: grid; grid-template-columns: 76px 91px 92px 92px; flex: none; }
.snaps { display: flex; gap: 3px; }
.snaps button { width: 20px; height: 21px; border: 1px solid #c9c9c9; border-radius: 2px; background: #fff; }
.snaps .drop { width: 30px; gap: 4px; }
.snaps .on { background: #cfe3fb; border-color: #8db8ea; }
.snaps .x { color: #b4b4b4; }
.sel.plane { width: 84px; height: 21px; border: 1px solid #c9c9c9; }

/* taskbar */
.taskbar { flex: none; display: flex; height: 31px; background: #1b2440; color: #fff; }
.start { width: 39px; }
.ask { display: flex; align-items: center; gap: 9px; width: 287px; padding-left: 10px; background: #f1f1f2; }
.ask input { flex: 1; font-size: 13px; }
.ask ::placeholder { color: #333; }
.apps { display: grid; grid-template-columns: repeat(13, 1fr); width: 540px; }
.apps svg { width: 20px; height: 20px; }
.apps .sm { width: 14px; height: 14px; }
.apps .on { background: #49546c; }
.tray { display: flex; flex: 1; justify-content: flex-end; align-items: center; gap: 7px; padding-right: 19px; }
.tray svg { width: 13px; height: 13px; }
.ime { font-size: 13px; }
.box { width: 13px; height: 13px; margin-left: 5px; background: #fff; color: #222; font-size: 11px; }
.msg { margin-left: 12px; }
.pointer { position: absolute; right: 26px; bottom: 70px; width: 9px; height: 14px; }
```
